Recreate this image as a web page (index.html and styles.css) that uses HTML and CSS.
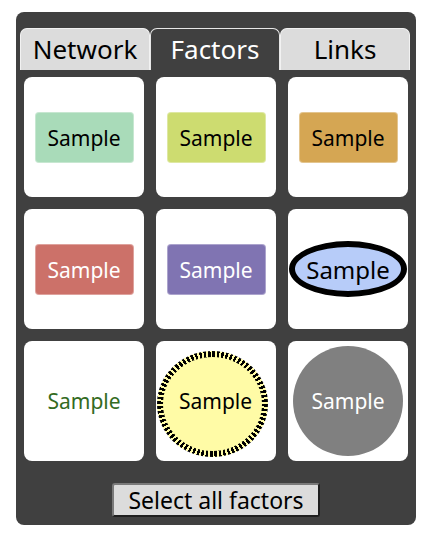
FILE: index.html
```html
<!DOCTYPE html>
<html>
<head>
<meta charset="utf-8">
<link rel="stylesheet" href="styles.css">
</head>
<body>
<div class="panel">
  <div class="tabs">
    <div class="tab">Network</div>
    <div class="tab active">Factors</div>
    <div class="tab">Links</div>
  </div>
  <div class="grid">
    <div class="card"><div class="box green">Sample</div></div>
    <div class="card"><div class="box lime">Sample</div></div>
    <div class="card"><div class="box orange">Sample</div></div>
    <div class="card"><div class="box red">Sample</div></div>
    <div class="card"><div class="box purple">Sample</div></div>
    <div class="card"><div class="ellipse">Sample</div></div>
    <div class="card"><div class="plain">Sample</div></div>
    <div class="card"><div class="dashed"><div class="dashed-inner">Sample</div></div></div>
    <div class="card"><div class="gray">Sample</div></div>
  </div>
  <div class="actions">
    <button class="select-all">Select all factors</button>
  </div>
</div>
</body>
</html>
```

FILE: styles.css
```css
html, body {
  margin: 0;
  padding: 0;
  background: #ffffff;
}
body {
  font-family: "Noto Sans", "Open Sans", sans-serif;
}
.panel {
  margin: 12px 0 0 16px;
  width: 400px;
  background: #404040;
  border-radius: 8px;
  padding: 16px 0 8px 0;
  box-sizing: border-box;
}
.tabs {
  display: flex;
  padding: 0 6px 0 4px;
}
.tab {
  flex: 1;
  height: 42px;
  box-sizing: border-box;
  background: #dcdcdc;
  border: 1px solid #f2f2f2;
  border-bottom: none;
  border-radius: 7px 7px 0 0;
  color: #000;
  font-size: 26px;
  line-height: 40px;
  text-align: center;
}
.tab.active {
  background: #404040;
  color: #fff;
  border-color: #e6e6e6;
}
.grid {
  display: grid;
  grid-template-columns: repeat(3, 120px);
  grid-auto-rows: 120px;
  gap: 12px;
  padding: 7px 8px 0 8px;
}
.card {
  background: #fff;
  border-radius: 8px;
  display: flex;
  align-items: center;
  justify-content: center;
  font-size: 21px;
  overflow: hidden;
}
.box {
  width: 99px;
  height: 51px;
  box-sizing: border-box;
  border-radius: 4px;
  border: 1px solid rgba(255,255,255,0.35);
  display: flex;
  align-items: center;
  justify-content: center;
  margin-top: 1px;
}
.green { background: #a9dbb9; color: #000; }
.lime { background: #cddc70; color: #000; }
.orange { background: #d5a653; color: #000; }
.red { background: #cc7169; color: #fff; }
.purple { background: #8074b2; color: #fff; }
.ellipse {
  width: 118px;
  height: 56px;
  box-sizing: border-box;
  border: 6px solid #000;
  border-radius: 50%;
  background: #b7ccf9;
  color: #000;
  font-size: 24px;
  display: flex;
  align-items: center;
  justify-content: center;
}
.plain {
  color: #336b22;
}
.dashed {
  width: 111px;
  height: 106px;
  border-radius: 50%;
  background: repeating-conic-gradient(#000 0deg 2.8deg, #fffba6 2.8deg 5deg);
  padding: 6px;
  box-sizing: border-box;
  margin: 6px 7px 0 0;
}
.dashed-inner {
  width: 100%;
  height: 100%;
  border-radius: 50%;
  background: #fffba6;
  color: #000;
  display: flex;
  align-items: center;
  justify-content: center;
  padding-left: 6px;
  padding-bottom: 6px;
  box-sizing: border-box;
}
.gray {
  width: 110px;
  height: 110px;
  border-radius: 50%;
  background: #808080;
  color: #fff;
  display: flex;
  align-items: center;
  justify-content: center;
}
.actions {
  display: flex;
  justify-content: center;
  padding-top: 22px;
}
.select-all {
  width: 208px;
  height: 34px;
  box-sizing: border-box;
  background: #dcdcdc;
  border: 2px solid;
  border-color: #7a7a7a #1f1f1f #1f1f1f #7a7a7a;
  border-radius: 3px;
  font-family: "Noto Sans", "Open Sans", sans-serif;
  font-size: 23px;
  line-height: 28px;
  color: #000;
  padding: 0;
}
```
